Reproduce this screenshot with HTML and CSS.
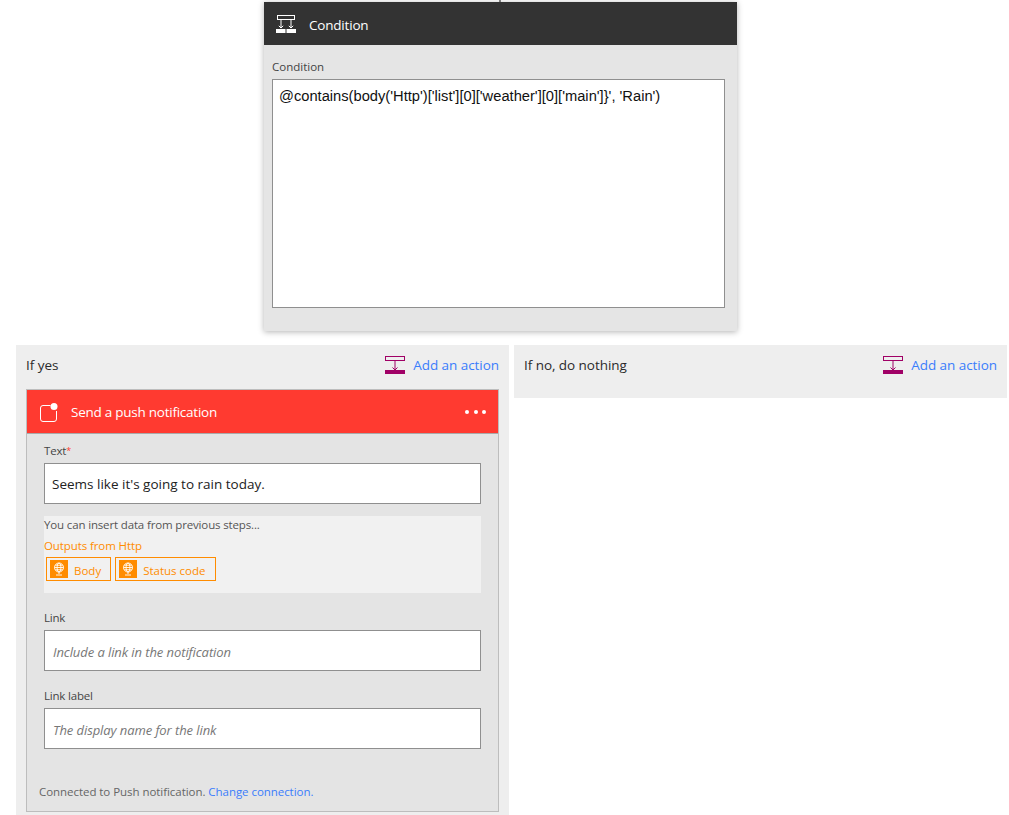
FILE: index.html
```html
<!DOCTYPE html>
<html lang="en">
<head>
<meta charset="utf-8">
<title>Condition</title>
<link rel="stylesheet" href="styles.css">
</head>
<body>
<main class="page">
  <div class="connector"></div>
  <section class="condition">
    <header class="condition-head">
      <svg class="condition-icon" width="20" height="18" viewBox="0 0 20 18" fill="none" stroke="#fff" stroke-width="1">
        <rect x="1.500" y="0.500" width="17" height="4"/>
        <path d="M5 5v8M2.800 10.800L5 13l2.200-2.200M15 5v8M12.800 10.800L15 13l2.200-2.200"/>
        <rect x="0" y="14" width="9.500" height="4" fill="#fff" stroke="none"/>
        <rect x="10.500" y="14" width="9.500" height="4" fill="#fff" stroke="none"/>
      </svg>
      <span class="condition-title">Condition</span>
    </header>
    <div class="condition-body">
      <div class="label">Condition</div>
      <div class="expression">@contains(body('Http')['list'][0]['weather'][0]['main']}', 'Rain')</div>
    </div>
  </section>

  <div class="branches">
    <section class="branch">
      <div class="branch-head">
        <span class="branch-title">If yes</span>
        <a class="add-action">
          <svg width="20" height="18" viewBox="0 0 20 18" fill="none" stroke="#a00066" stroke-width="1">
            <rect x="0.500" y="0.500" width="19" height="4"/>
            <path d="M10 5v9M7.500 11.500L10 14l2.500-2.500"/>
            <rect x="0" y="14" width="20" height="4" fill="#a00066" stroke="none"/>
          </svg>
          <span>Add an action</span>
        </a>
      </div>
      <article class="action">
        <header class="action-head">
          <svg class="push-icon" width="20" height="20" viewBox="0 0 20 20" fill="none">
            <path d="M10.500 2.500H3a2.500 2.500 0 0 0-2.500 2.500v11A2.500 2.500 0 0 0 3 18.500h11a2.500 2.500 0 0 0 2.500-2.500V8" stroke="#fff" stroke-width="1"/>
            <circle cx="14" cy="3.500" r="3.500" fill="#fff"/>
          </svg>
          <span class="action-title">Send a push notification</span>
          <span class="dots"><i></i><i></i><i></i></span>
        </header>
        <div class="action-body">
          <div class="label">Text<span class="req">*</span></div>
          <div class="input filled">Seems like it's going to rain today.</div>
          <div class="insert">
            <div class="insert-hint">You can insert data from previous steps...</div>
            <div class="insert-source">Outputs from Http</div>
            <div class="tokens">
              <span class="token">
                <span class="token-icon"><svg width="14" height="14" viewBox="0 0 14 14" fill="none" stroke="#fff" stroke-width="0.900"><circle cx="7" cy="5.500" r="4.500"/><ellipse cx="7" cy="5.500" rx="2" ry="4.500"/><path d="M2.500 5.500h9M3.200 3.200h7.600M3.200 7.800h7.600M7 10v2M4 13h6"/></svg></span>
                <span class="token-text">Body</span>
              </span>
              <span class="token">
                <span class="token-icon"><svg width="14" height="14" viewBox="0 0 14 14" fill="none" stroke="#fff" stroke-width="0.900"><circle cx="7" cy="5.500" r="4.500"/><ellipse cx="7" cy="5.500" rx="2" ry="4.500"/><path d="M2.500 5.500h9M3.200 3.200h7.600M3.200 7.800h7.600M7 10v2M4 13h6"/></svg></span>
                <span class="token-text">Status code</span>
              </span>
            </div>
          </div>
          <div class="label link-label">Link</div>
          <div class="input placeholder">Include a link in the notification</div>
          <div class="label link-label">Link label</div>
          <div class="input placeholder">The display name for the link</div>
        </div>
        <footer class="action-foot">Connected to Push notification. <a class="change">Change connection.</a></footer>
      </article>
    </section>

    <section class="branch branch-no">
      <div class="branch-head">
        <span class="branch-title">If no, do nothing</span>
        <a class="add-action">
          <svg width="20" height="18" viewBox="0 0 20 18" fill="none" stroke="#a00066" stroke-width="1">
            <rect x="0.500" y="0.500" width="19" height="4"/>
            <path d="M10 5v9M7.500 11.500L10 14l2.500-2.500"/>
            <rect x="0" y="14" width="20" height="4" fill="#a00066" stroke="none"/>
          </svg>
          <span>Add an action</span>
        </a>
      </div>
    </section>
  </div>
</main>
</body>
</html>
```
FILE: styles.css
```css
* { box-sizing: border-box; }
html, body { margin: 0; height: 815px; overflow: hidden; background: #fff; }
body { font-family: "Open Sans", "Noto Sans", sans-serif; color: #333; }
.page { width: 1009px; height: 815px; overflow: hidden; }
.connector { width: 2px; height: 2px; margin-left: 499px; background: #888; }

.condition { width: 473px; height: 329px; margin-left: 264px; background: #e5e5e5; box-shadow: 0 1px 6px rgba(0,0,0,.3); }
.condition-head { height: 43px; background: #333; display: flex; align-items: center; padding-left: 12px; color: #fff; }
.condition-icon { margin-top: 1px; }
.condition-title { margin: 2px 0 0 13px; font-size: 13.500px; letter-spacing: -.2px; }
.condition-body { padding: 14px 12px 0 8px; }
.condition-body .label { letter-spacing: 0; }
.label { font-size: 11.500px; line-height: 16px; color: #444; letter-spacing: -.2px; }
.expression { margin-top: 4px; height: 229px; background: #fff; border: 1px solid #8f8f8f; padding: 7px 6px; font-family: "Liberation Sans", Arial, sans-serif; font-size: 14.700px; line-height: 18px; color: #111; }

.branches { display: flex; align-items: flex-start; gap: 5px; margin: 14px 0 0 16px; }
.branch { width: 493px; height: 470px; background: #eee; padding: 0 10px; }
.branch-no { height: 53px; }
.branch-head { height: 44px; padding-bottom: 5px; display: flex; align-items: center; justify-content: space-between; }
.branch-title { font-size: 13.500px; letter-spacing: -.05px; color: #2a2a2a; }
.add-action { display: flex; align-items: center; gap: 8px; font-size: 13.500px; color: #3a7dfc; letter-spacing: -.05px; }

.action { height: 423px; background: #e4e4e4; border: 1px solid #bdbdbd; display: flex; flex-direction: column; }
.action-head { height: 44px; background: #ff3a30; color: #fff; display: flex; align-items: center; padding: 0 12px 0 13px; border-bottom: 1px solid #a9a9a9; }
.push-icon { margin-top: 2px; }
.action-title { margin-left: 11px; font-size: 13.500px; letter-spacing: -.25px; }
.dots { margin-left: auto; display: flex; gap: 4.500px; }
.dots i { width: 4px; height: 4px; border-radius: 50%; background: #fff; }
.action-body { padding: 9px 17px 0; flex: 1; }
.req { color: #ff3a30; font-size: 9px; vertical-align: 1px; }
.input { margin-top: 4px; height: 41px; background: #fff; border: 1px solid #8f8f8f; padding: 0 7px; display: flex; align-items: center; }
.filled { font-size: 13.500px; color: #222; }
.placeholder { padding: 2px 8px 0; font-style: italic; color: #777; font-size: 13px; letter-spacing: -.08px; }
.insert { margin-top: 12px; height: 77px; background: #f1f1f1; }
.insert-hint { font-size: 11.500px; line-height: 18px; color: #555; letter-spacing: -.15px; }
.insert-source { margin-top: 3px; font-size: 11.500px; line-height: 17px; color: #ff8c00; letter-spacing: -.1px; }
.tokens { display: flex; gap: 4px; margin: 3px 0 0 2px; }
.token { height: 24px; border: 1px solid #ff8c00; padding: 2px 9px 2px 3px; display: flex; align-items: center; gap: 6px; font-size: 11.500px; color: #ff8c00; }
.token-icon { width: 18px; height: 18px; background: #ff8c00; display: flex; align-items: center; justify-content: center; }
.token-text { margin-top: 2px; }
.link-label { margin-top: 17px; }
.action-foot { padding: 14px 12px 0; height: 41px; font-size: 11.500px; color: #666; letter-spacing: -.05px; }
.change { color: #3a7dfc; }
```
